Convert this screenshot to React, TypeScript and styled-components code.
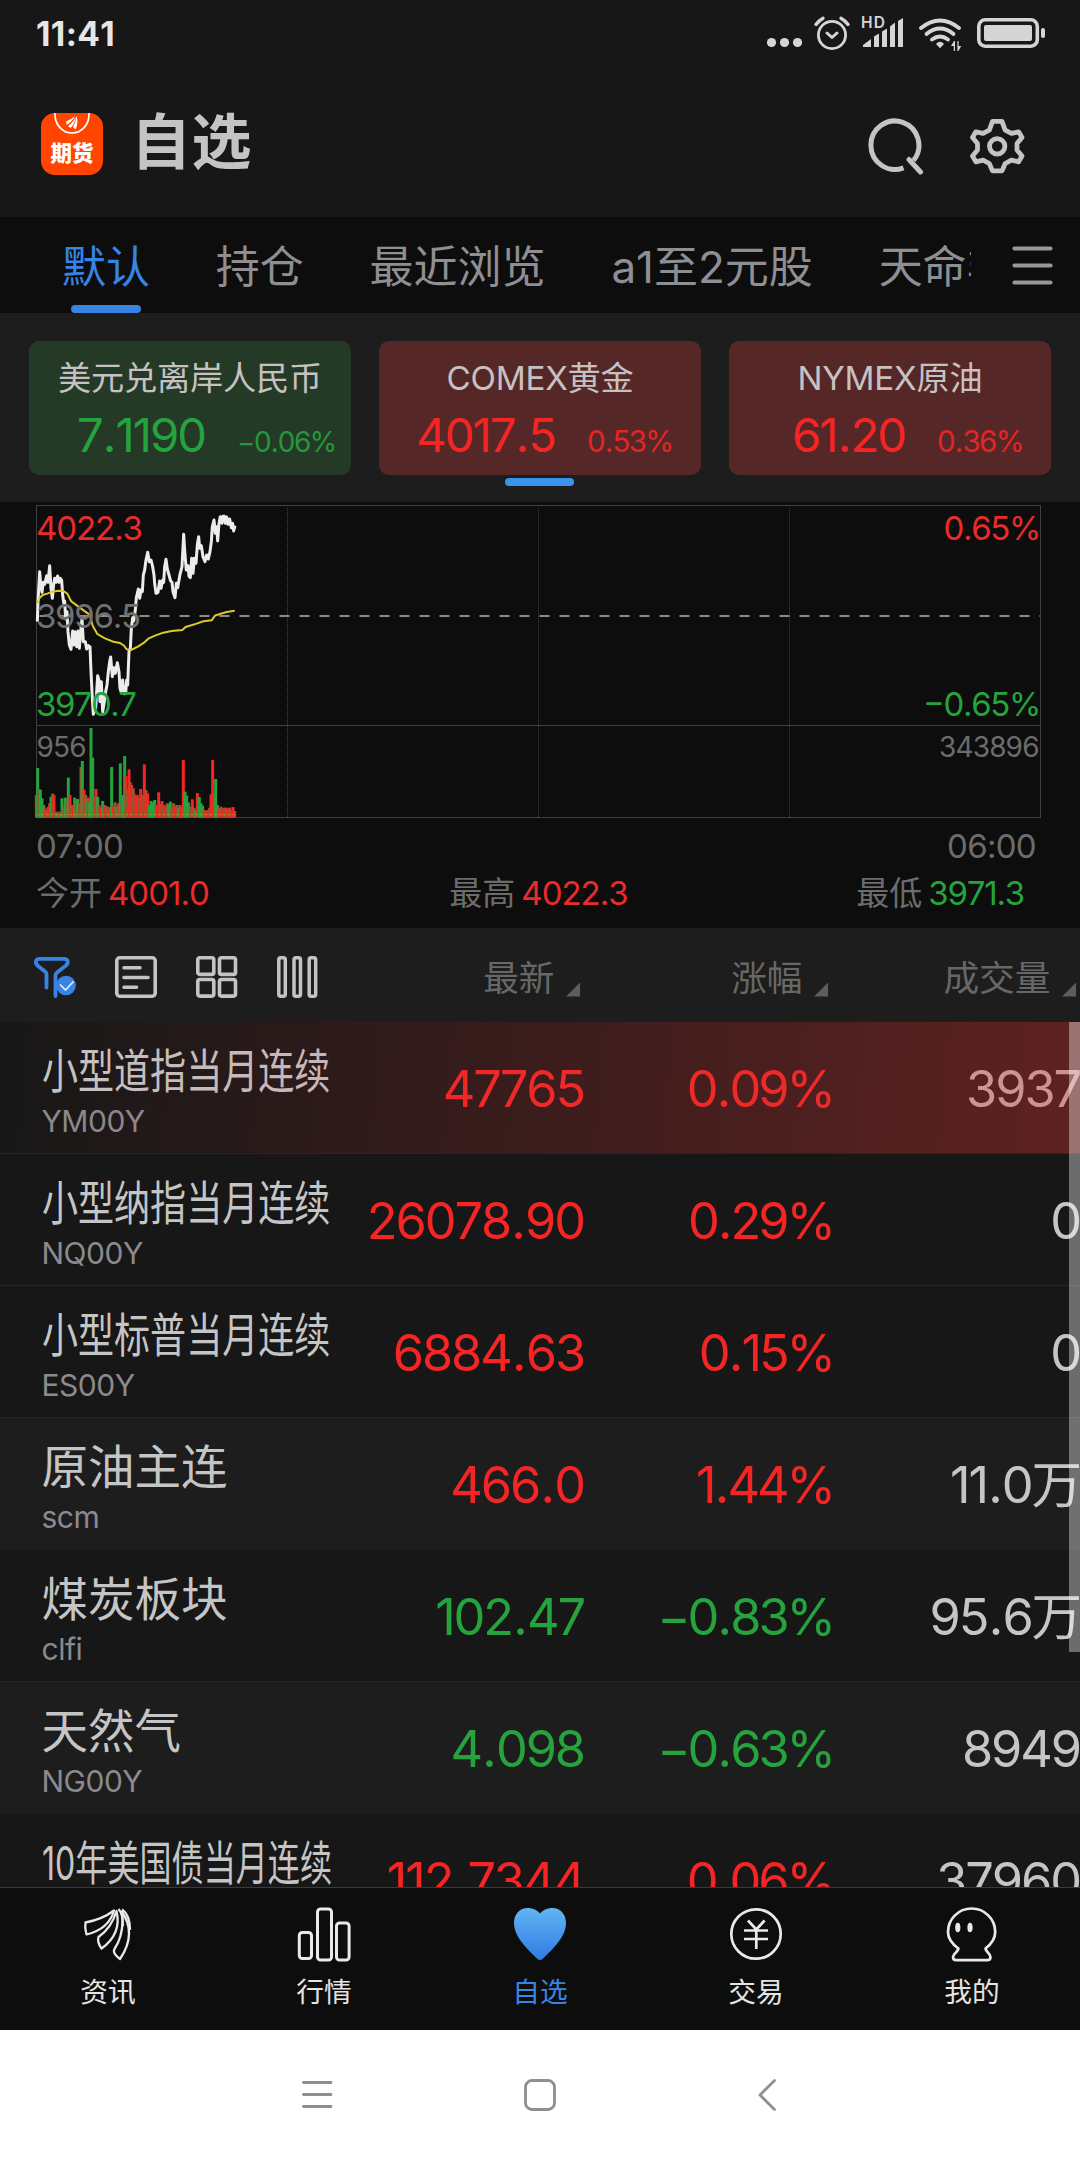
import React from "react";
import styled, { createGlobalStyle, css } from "styled-components";

const RED = "#f52525";
const GREEN = "#25a33d";
const BLUE = "#3784e4";
const LIGHT = "#c5c5c5";

const GlobalStyle = createGlobalStyle`
  *, *::before, *::after { box-sizing: border-box; }
  body {
    margin: 0;
    background: #171717;
    font-family: Inter, "Noto Sans CJK SC", sans-serif;
    font-kerning: none;
    -webkit-font-smoothing: antialiased;
  }
`;

const Screen = styled.div`
  width: 1080px;
  height: 2160px;
  display: flex;
  flex-direction: column;
  overflow: hidden;
  background: #171717;
`;

/* ---------- status bar and header ---------- */

const StatusBar = styled.div`
  height: 66px;
  padding: 2px 34px 0 36px;
  display: flex;
  justify-content: space-between;
  align-items: center;
`;

const Clock = styled.time`
  font-size: 33.5px;
  line-height: 40px;
  font-weight: 700;
  letter-spacing: 0.4px;
  color: #e6e6e6;
`;

const Header = styled.header`
  height: 151px;
  padding: 0 54px 0 41px;
  display: flex;
  align-items: center;
`;

const AppLogo = styled.div`
  width: 62px;
  height: 62px;
  margin-top: 5px;
  border-radius: 14px;
  background: #ff4500;
  overflow: hidden;
  display: flex;
  flex-direction: column;
  align-items: center;
`;

const LogoName = styled.span`
  margin-top: 3px;
  font-size: 21.5px;
  line-height: 30px;
  font-weight: 900;
  color: #fff;
`;

const Title = styled.h1`
  flex: 1;
  margin: 0 0 0 28px;
  font-size: 60px;
  line-height: 80px;
  font-weight: 700;
  letter-spacing: 0.5px;
  color: #c4c4c4;
`;

const HeaderActions = styled.div`
  display: flex;
  gap: 44px;
  padding-top: 8px;
`;

/* ---------- tabs ---------- */

const TabBar = styled.nav`
  height: 96px;
  background: #0d0d0d;
  display: flex;
`;

const TabList = styled.div`
  width: 971px;
  padding-left: 62px;
  display: flex;
  gap: 65.8px;
  overflow: hidden;
`;

const Tab = styled.div<{ $active?: boolean }>`
  flex: none;
  display: flex;
  flex-direction: column;
  align-items: center;
  justify-content: space-between;
  font-size: 44px;
  line-height: 64px;
  padding-top: 18px;
  white-space: nowrap;
  color: ${(p) => (p.$active ? BLUE : "#8e8e93")};
  &::after {
    content: "";
    width: 70px;
    height: 8px;
    border-radius: 4px;
    background: ${(p) => (p.$active ? BLUE : "transparent")};
  }
`;

const TabMenu = styled.div`
  padding: 28px 0 0 40px;
`;

/* ---------- index cards ---------- */

const CardStrip = styled.section`
  height: 189px;
  padding-top: 28px;
  background: #1d1d1d;
  display: flex;
  flex-direction: column;
  align-items: center;
  gap: 3px;
`;

const Cards = styled.div`
  display: grid;
  grid-template-columns: repeat(3, 322px);
  gap: 28px;
`;

const Card = styled.div<{ $down?: boolean }>`
  height: 134px;
  border-radius: 10px;
  background: ${(p) => (p.$down ? "#243a27" : "#562727")};
  color: ${(p) => (p.$down ? GREEN : RED)};
`;

const CardName = styled.div`
  padding-top: 12px;
  text-align: center;
  font-size: 33.2px;
  line-height: 50px;
  letter-spacing: -0.2px;
  color: #c6c2c2;
`;

const CardFigures = styled.div`
  display: grid;
  grid-template-columns: 176px 1fr;
  column-gap: 32px;
  align-items: baseline;
`;

const CardPrice = styled.span`
  text-align: right;
  font-size: 47.2px;
  line-height: 64px;
  letter-spacing: -2px;
`;

const CardChange = styled.span<{ $small?: boolean }>`
  font-size: ${(p) => (p.$small ? 28 : 29.5)}px;
  letter-spacing: -1.6px;
  white-space: nowrap;
  opacity: 0.9;
`;

const PageMark = styled.div`
  width: 69px;
  height: 8px;
  margin-right: 2px;
  border-radius: 4px;
  background: #3a92ec;
`;

/* ---------- intraday chart ---------- */

const ChartPanel = styled.section`
  height: 426px;
  background: #0d0d0d;
`;

const ChartSvg = styled.svg`
  display: block;
`;

const Times = styled.div`
  display: flex;
  justify-content: space-between;
  padding: 0 44px 0 36px;
  margin-top: 4px;
  font-size: 33px;
  line-height: 40px;
  letter-spacing: -0.7px;
  color: #6c6c6c;
`;

const Stats = styled.div`
  display: grid;
  grid-template-columns: 1fr 1fr 1fr;
  padding: 0 56px 0 36px;
  margin-top: 3px;
  font-size: 33px;
  line-height: 48px;
  color: #6c6c6c;
`;

const Stat = styled.div<{ $align: string }>`
  text-align: ${(p) => p.$align};
  ${(p) => p.$align === "center" && css`padding-left: 17px;`}
`;

const StatValue = styled.span<{ $down?: boolean }>`
  margin-left: 6px;
  letter-spacing: ${(p) => (p.$down ? -1.2 : -1)}px;
  color: ${(p) => (p.$down ? GREEN : "#e92b2b")};
`;

/* ---------- quote table ---------- */

const columns = css`
  display: grid;
  grid-template-columns: 336px 248px 248px 248px;
`;

const TableHead = styled.div`
  ${columns}
  height: 94px;
  background: #1d1d1d;
`;

const ViewIcons = styled.div`
  display: flex;
  align-items: center;
  gap: 37.2px;
  padding: 4px 0 0 33px;
`;

const HeadCell = styled.div`
  display: flex;
  justify-content: flex-end;
  align-items: center;
  gap: 11.5px;
  padding: 5px 4px 0 0;
  font-size: 35.7px;
  line-height: 52px;
  white-space: nowrap;
  color: #676767;
`;

const SortMark = styled.i`
  width: 14px;
  height: 14px;
  margin-top: 24px;
  background: #5d5d60;
  clip-path: polygon(100% 0, 100% 100%, 0 100%);
`;

const Table = styled.div`
  position: relative;
  height: 865px;
  overflow: hidden;
`;

const ScrollThumb = styled.div`
  position: absolute;
  top: 0;
  right: 0;
  width: 11px;
  height: 630px;
  background: rgba(255, 255, 255, 0.37);
`;

const Row = styled.div<{ $raised?: boolean; $flash?: boolean }>`
  ${columns}
  position: relative;
  height: 132px;
  background: ${(p) => (p.$raised ? "#1d1d1d" : "#171717")};
  border-bottom: 1px solid ${(p) => (p.$raised ? "#1d1d1d" : "#262626")};
  ${(p) =>
    p.$flash &&
    css`
      &::after {
        content: "";
        position: absolute;
        inset: 0;
        background: linear-gradient(95deg, rgba(220, 52, 52, 0) 0%, rgba(220, 52, 52, 0.37) 100%);
      }
    `}
`;

const NameCell = styled.div`
  padding: 16px 0 0 41.5px;
  white-space: nowrap;
`;

const Name = styled.div<{ $squeeze: number }>`
  font-size: 46.5px;
  line-height: 66px;
  color: ${LIGHT};
  transform: scaleX(${(p) => p.$squeeze});
  transform-origin: left;
`;

const Code = styled.div`
  margin-top: -1px;
  font-size: 30px;
  line-height: 36px;
  letter-spacing: -0.5px;
  color: #8a8a8f;
`;

const Figure = styled.div<{ $tone?: "up" | "down"; $percent?: boolean }>`
  padding-top: 35px;
  margin-right: ${(p) => (p.$percent ? -1 : 0)}px;
  text-align: right;
  font-size: 50.5px;
  line-height: 64px;
  letter-spacing: ${(p) => (p.$percent ? -3.1 : -2.1)}px;
  white-space: nowrap;
  color: ${(p) => (p.$tone === "up" ? RED : p.$tone === "down" ? GREEN : LIGHT)};
`;

const Point = styled.span`
  margin: 0 0.025em;
`;

/* ---------- bottom navigation ---------- */

const BottomNav = styled.nav`
  height: 143px;
  display: grid;
  grid-template-columns: repeat(5, 1fr);
  border-top: 1px solid #3a3a3a;
  background: #0d0d0d;
`;

const NavItem = styled.div<{ $active?: boolean }>`
  display: flex;
  flex-direction: column;
  align-items: center;
  padding-top: 18px;
  gap: 10px;
  font-size: 27.7px;
  line-height: 40px;
  color: ${(p) => (p.$active ? BLUE : "#e4e4e4")};
`;

const SystemBar = styled.div`
  height: 130px;
  background: #fff;
  display: grid;
  grid-template-columns: 302px 222px 234px 1fr;
  align-items: center;
  svg { grid-row: 1; display: block; }
  svg:nth-child(1) { grid-column: 2; }
  svg:nth-child(2) { grid-column: 3; }
  svg:nth-child(3) { grid-column: 4; }
`;

/* ---------- icons ---------- */

const StatusIcons = () => (
  <svg width="282" height="46" viewBox="764 11 282 46" fill="#d5d5d5">
    <circle cx="771.5" cy="42.5" r="4.6" />
    <circle cx="784.5" cy="42.5" r="4.6" />
    <circle cx="797.5" cy="42.5" r="4.6" />
    <g fill="none" stroke="#d5d5d5" strokeLinecap="round" strokeLinejoin="round">
      <circle cx="832" cy="35" r="13.6" strokeWidth="2.8" />
      <path d="M827 33l5 4.5 5-4.5" strokeWidth="3" />
      <path d="M816 24.500Q819 20.500 823 18.200M848 24.500Q845 20.500 841 18.200" strokeWidth="3.400" />
    </g>
    <text x="861" y="28" fontSize="15.500" fontWeight="600" textLength="24" fontFamily="Inter, sans-serif">HD</text>
    <path d="M863 47v-2l8-6v8zM874 47V36.500l5-3V47zM882 47V31.500l5-3V47zM890 47V26.500l5-4V47zM898 47V21l5-3V47z" />
    <g fill="none" stroke="#d5d5d5" strokeWidth="3.800" strokeLinecap="round">
      <path d="M921 28Q940 13 959 28" />
      <path d="M926.500 34Q940 23 953.500 34" />
      <path d="M932 39.500Q940 33.500 948 39.500" />
    </g>
    <path d="M936 44q4-4.500 8 0l-4 4.200z" />
    <path d="M951 46l3-5h1v10h-1.200v-5zM957.400 41h1.200v5h2.600l-2.800 5h-1z" />
    <rect x="978.800" y="19.800" width="58.500" height="26.400" rx="6.500" fill="none" stroke="#d5d5d5" strokeWidth="3.600" />
    <rect x="984" y="25" width="48" height="16" rx="2" />
    <rect x="1041" y="28" width="4" height="10" rx="2" />
  </svg>
);

const SearchIcon = () => (
  <svg width="58" height="58" viewBox="866 116 58 58" fill="none" stroke="#c4c4c4" strokeWidth="5">
    <path d="M903.500 166.800A24 24.200 0 1 1 913.500 159.500" />
    <path d="M909 158.500l11.500 12.500" strokeLinecap="round" />
  </svg>
);

const GearIcon = () => (
  <svg width="58" height="58" viewBox="968 116 58 58" fill="none" stroke="#c4c4c4" strokeWidth="4.800" strokeLinejoin="round">
    <path d="M992.500 120.400h9.500l3.200 8.800 6.200 3.200 7.200-1.600 3.400 5.700-5 6v6.500l5 6-3.400 5.800-7.200-1.700-6.200 3.400-3.200 7.400h-9.500l-3.200-7.400-6.200-3.400-7.200 1.700-3.400-5.800 5-6v-6.500l-5-6 3.400-5.700 7.200 1.600 6.200-3.200z" />
    <circle cx="997.200" cy="145.300" r="7.700" />
  </svg>
);

const LogoMark = () => (
  <svg width="36" height="22" viewBox="0 0 36 22" fill="none">
    <path d="M1 0C0.500 11 8 20 18 20S35.500 11 35 0" stroke="#fff" strokeWidth="1.700" />
    <path d="M12 8.500Q17 6.500 21 3Q18 9 12.600 11.800zM14 13Q19 10 21.500 4Q21 11 16.500 15zM19 14Q22 9 22.300 3Q25 9 21.500 16.500z" fill="#fff" />
  </svg>
);

const MenuIcon = () => (
  <svg width="42" height="44" viewBox="0 0 42 44" stroke="#98989a" strokeWidth="4.200" strokeLinecap="round">
    <path d="M3.500 3.500h36M3.500 20.500h36M3.500 37.500h36" />
  </svg>
);

const FilterIcon = () => (
  <svg width="44" height="44" viewBox="0 0 44 44" fill="none" stroke={BLUE} strokeWidth="3.800" strokeLinecap="round" strokeLinejoin="round">
    <path d="M13.500 32.500V19Q13.500 17.500 12 16.500L4.500 10.500Q2 8 3.200 5.500Q4 3.800 6.500 3.800H31Q34 3.800 34.700 6Q35.200 8.500 33 10.500L24 17.500Q22.500 18.700 22.500 20.500V41" />
    <circle cx="33" cy="30.500" r="9.800" fill={BLUE} stroke="none" />
    <path d="M27.500 30l5 5 7.500-8" stroke="#e8f0fb" strokeWidth="1.700" />
  </svg>
);

const ListIcon = () => (
  <svg width="44" height="44" viewBox="0 0 44 44" fill="none" stroke="#c4c4c4" strokeWidth="3.600">
    <rect x="2.800" y="2.800" width="38.400" height="38.400" rx="3" />
    <path d="M10 12.800h16M10 22.500h24M10 32.200h12.500" strokeLinecap="round" />
  </svg>
);

const GridIcon = () => (
  <svg width="44" height="44" viewBox="0 0 44 44" fill="none" stroke="#c4c4c4" strokeWidth="3.600">
    <rect x="2.800" y="2.800" width="16" height="16.600" rx="2" />
    <rect x="24.500" y="2.800" width="16" height="16.600" rx="2" />
    <rect x="2.800" y="24.500" width="16" height="16.600" rx="2" />
    <rect x="24.500" y="24.500" width="16" height="16.600" rx="2" />
  </svg>
);

const ColumnsIcon = () => (
  <svg width="44" height="44" viewBox="0 0 44 44" fill="none" stroke="#c4c4c4" strokeWidth="3.500">
    <rect x="1.800" y="2.800" width="6.500" height="38.400" rx="2" />
    <rect x="17" y="2.800" width="6.500" height="38.400" rx="2" />
    <rect x="32.200" y="2.800" width="6.500" height="38.400" rx="2" />
  </svg>
);

const NewsIcon = () => (
  <svg width="56" height="56" viewBox="0 0 56 56" fill="none" stroke="#e9e9e9" strokeWidth="2.300" strokeLinejoin="round">
    <path d="M5.500 16.500Q22 13.500 34 4.500Q29 23 6.500 28.500Q4.500 22 5.500 16.500z" />
    <path d="M18.500 31Q31.500 22 36.500 5Q42 28 21.500 42.500Q17 36 18.500 31z" />
    <path d="M34.500 43Q44.500 28 42 6Q57 28 40 53Q32 47 34.500 43z" />
    <path d="M38.500 3Q43 8 43 20M42 3.500Q50 9 50 24" />
  </svg>
);

const MarketIcon = () => (
  <svg width="56" height="56" viewBox="0 0 56 56" fill="none" stroke="#e9e9e9" strokeWidth="3">
    <rect x="3.300" y="26.500" width="12.200" height="26" rx="3" />
    <rect x="21.500" y="3" width="14" height="51" rx="3" />
    <rect x="40.500" y="17" width="12.600" height="37" rx="3" />
  </svg>
);

const HeartIcon = () => (
  <svg width="56" height="56" viewBox="0 0 56 56">
    <defs>
      <linearGradient id="heart" x1="0" y1="0" x2="0" y2="1">
        <stop offset="0" stopColor="#62b4f2" />
        <stop offset="1" stopColor="#2f7be4" />
      </linearGradient>
    </defs>
    <path d="M28 7.500C24.500 3.500 20 2 15.500 2 7 2 1.700 9 2 18 2.500 30.500 14 42 25 52.500Q28 55.500 31 52.500C42 42 53.500 30.500 54 18 54.300 9 49 2 40.500 2 36 2 31.500 3.500 28 7.500z" fill="url(#heart)" />
  </svg>
);

const TradeIcon = () => (
  <svg width="56" height="56" viewBox="0 0 56 56" fill="none" stroke="#e9e9e9" strokeWidth="2.700">
    <circle cx="28" cy="28" r="24.700" />
    <path d="M20 14.500l8.300 9 8.300-9M28.300 23.500V43M16 24.500h24M16 33h24" />
  </svg>
);

const ProfileIcon = () => (
  <svg width="56" height="56" viewBox="0 0 56 56" fill="none" stroke="#e9e9e9" strokeWidth="2.700" strokeLinejoin="round">
    <path d="M14.400 42.500C7.500 37.500 4 32 4 26A23.600 23.500 0 0 1 51.200 26C51.200 32 48 37.500 41.500 42.500C42 46.500 46.300 47 46.500 51Q46.500 54.200 43 54.200H12.500Q9 54.200 9 51C9.200 47 14 46.500 14.400 42.500z" />
    <ellipse cx="13.800" cy="21.500" rx="2.600" ry="4.800" fill="#e9e9e9" stroke="none" />
    <ellipse cx="26" cy="21.500" rx="2.600" ry="4.800" fill="#e9e9e9" stroke="none" />
  </svg>
);

/* ---------- chart data ---------- */

const pricePoints =
  "52,380 54,320 59,230 62,265 66,292 70,262 74,268 80,242 84,262 89,212 93,280 97,310 101,268 104,250 108,262 113,243 117,262 121,250 125,256 128,300 132,330 134,318 137,372 141,350 144,410 148,450 153,463 158,408 161,450 165,410 170,455 174,408 178,460 182,410 186,372 190,440 196,440 200,462 205,452 210,455 213,530 217,610 220,658 227,640 230,590 233,542 238,560 240,620 244,560 248,650 253,620 257,590 261,570 265,530 269,500 272,486 277,545 282,518 286,535 292,503 297,530 300,580 303,590 308,555 312,596 317,595 320,555 323,570 327,470 331,460 334,400 338,368 341,378 346,345 349,308 355,282 359,310 363,285 367,290 370,240 374,225 378,195 383,172 388,200 393,195 398,215 402,240 404,265 408,295 414,292 419,258 423,280 428,255 431,262 434,215 438,193 442,222 447,240 452,258 456,262 459,290 465,308 469,265 473,278 480,238 486,215 491,118 495,180 499,225 504,212 507,243 511,248 515,190 519,235 523,190 528,205 532,150 536,125 539,160 544,152 549,185 555,200 560,180 565,192 570,170 574,140 577,95 582,75 586,115 590,95 593,138 597,85 601,65 606,85 609,64 613,64 616,85 620,66 624,88 629,72 634,98 638,85 641,108 645,92";

const averagePoints =
  "52,325 58,310 68,300 82,296 97,290 115,287 130,288 142,296 153,318 175,335 200,353 210,360 218,392 232,417 255,430 280,440 300,444 312,452 320,463 335,464 355,454 372,443 385,431 405,422 430,413 455,408 487,405 497,396 530,386 550,379 575,376 585,362 600,357 620,351 644,347";

type Bar = [number, number, "r" | "g" | "b"];
const bars: Bar[] = [
  [49, 900, "b"], [53, 819, "g"], [56, 882, "b"], [61, 884, "g"], [66, 910, "g"], [71, 930, "g"], [75, 940, "r"],
  [79, 945, "b"], [84, 936, "r"], [89, 925, "r"], [93, 905, "g"], [98, 896, "b"], [102, 900, "r"], [107, 950, "b"],
  [111, 955, "g"], [116, 950, "b"], [121, 955, "g"], [126, 910, "g"], [131, 935, "b"], [136, 908, "g"], [141, 920, "b"],
  [145, 848, "g"], [150, 900, "r"], [155, 930, "b"], [160, 938, "r"], [164, 908, "g"], [168, 920, "b"], [173, 912, "g"],
  [178, 925, "b"], [183, 816, "b"], [187, 798, "g"], [192, 884, "r"], [197, 900, "b"], [201, 920, "g"], [205, 908, "r"],
  [209, 920, "g"], [213, 699, "g"], [218, 788, "g"], [223, 905, "b"], [228, 882, "r"], [233, 905, "g"], [237, 930, "b"],
  [242, 938, "r"], [248, 918, "g"], [253, 930, "b"], [257, 932, "r"], [262, 935, "b"], [266, 936, "r"], [270, 940, "b"],
  [275, 816, "g"], [280, 935, "r"], [285, 922, "b"], [290, 935, "g"], [295, 925, "r"], [301, 805, "g"], [306, 918, "b"],
  [310, 900, "g"], [314, 783, "g"], [318, 844, "r"], [322, 884, "b"], [327, 823, "r"], [331, 862, "b"], [335, 870, "r"],
  [340, 880, "b"], [344, 898, "r"], [348, 905, "b"], [352, 900, "r"], [357, 910, "b"], [362, 882, "r"], [367, 900, "b"],
  [373, 808, "r"], [378, 885, "b"], [383, 895, "r"], [388, 930, "g"], [393, 918, "g"], [398, 922, "g"], [404, 915, "g"],
  [409, 930, "r"], [416, 892, "r"], [421, 925, "b"], [426, 918, "r"], [431, 930, "b"], [436, 935, "r"], [441, 925, "b"],
  [446, 928, "g"], [451, 920, "g"], [456, 938, "r"], [461, 925, "b"], [466, 935, "r"], [471, 930, "b"], [476, 938, "g"],
  [480, 930, "b"], [485, 935, "r"], [490, 795, "r"], [495, 890, "g"], [500, 902, "g"], [505, 922, "g"], [511, 935, "b"],
  [517, 913, "r"], [522, 938, "b"], [527, 945, "g"], [532, 894, "r"], [538, 906, "g"], [543, 925, "g"], [548, 932, "g"],
  [553, 945, "r"], [558, 948, "b"], [563, 945, "r"], [569, 938, "b"], [573, 898, "r"], [578, 795, "r"], [583, 900, "b"],
  [587, 852, "g"], [592, 930, "g"], [598, 938, "r"], [603, 935, "b"], [608, 940, "r"], [614, 938, "b"], [619, 938, "r"],
  [624, 942, "b"], [629, 938, "r"], [634, 945, "b"], [639, 936, "r"], [644, 948, "r"],
];
const barColor = { r: RED, g: GREEN, b: "#98572c" };

const IntradayChart = () => (
  <ChartSvg width="1080" height="320" viewBox="0 502 1080 320" fontFamily="Inter, sans-serif">
    <g stroke="#404040" fill="none" shapeRendering="crispEdges">
      <rect x="36.500" y="505.500" width="1004" height="312" />
      <path d="M36 725.500H1041" />
      <path d="M287.500 508V817M538.500 508V817M789.500 508V817" strokeDasharray="1 1" />
    </g>
    <path d="M39.500 616H1040" stroke="#8c8c8c" strokeWidth="2" strokeDasharray="10 10" />
    <g transform="translate(20 495) scale(0.33333)">
      {bars.map(([x, top, tone]) => (
        <rect key={x} x={x - 4.500} y={top} width="9" height={968 - top} fill={barColor[tone]} />
      ))}
      <path d="M50 959H646" stroke="#b08a30" strokeWidth="3" strokeDasharray="8 6" />
      <polyline points={pricePoints} fill="none" stroke="#ececec" strokeWidth="9" strokeLinejoin="round" />
      <polyline points={averagePoints} fill="none" stroke="#dccb27" strokeWidth="6" />
    </g>
    <g fontSize="33">
      <text x="36" y="540" fill="#e92b2b" textLength="107">4022.3</text>
      <text x="36" y="628" fill="#707070" textLength="105">3996.5</text>
      <text x="36" y="716" fill={GREEN} textLength="101">3970.7</text>
      <text x="943.500" y="540" fill="#e92b2b" textLength="98">0.65%</text>
      <text x="923" y="716" fill={GREEN} textLength="118.500">−0.65%</text>
    </g>
    <g fontSize="28" fill="#6c6c6c">
      <text x="36.500" y="757" textLength="50">956</text>
      <text x="939" y="757" textLength="100.500">343896</text>
    </g>
  </ChartSvg>
);

/* ---------- page data ---------- */

const cards = [
  { name: "美元兑离岸人民币", price: "7.1190", change: "−0.06%", down: true },
  { name: "COMEX黄金", price: "4017.5", change: "0.53%" },
  { name: "NYMEX原油", price: "61.20", change: "0.36%" },
];

type Quote = {
  name: string;
  code: string;
  price: string;
  change: string;
  volume: string;
  down?: boolean;
  squeeze?: number;
  raised?: boolean;
  flash?: boolean;
};

const quotes: Quote[] = [
  { name: "小型道指当月连续", code: "YM00Y", price: "47765", change: "0.09%", volume: "3937", squeeze: 0.775, flash: true },
  { name: "小型纳指当月连续", code: "NQ00Y", price: "26078.90", change: "0.29%", volume: "0", squeeze: 0.775 },
  { name: "小型标普当月连续", code: "ES00Y", price: "6884.63", change: "0.15%", volume: "0", squeeze: 0.775 },
  { name: "原油主连", code: "scm", price: "466.0", change: "1.44%", volume: "11.0万", raised: true },
  { name: "煤炭板块", code: "clfi", price: "102.47", change: "−0.83%", volume: "95.6万", down: true },
  { name: "天然气", code: "NG00Y", price: "4.098", change: "−0.63%", volume: "8949", down: true, raised: true },
  { name: "10年美国债当月连续", code: "ZN00Y", price: "112.7344", change: "0.06%", volume: "37960", squeeze: 0.69 },
];

const tabs = ["默认", "持仓", "最近浏览", "a1至2元股", "天命非"];

const navItems = [
  { label: "资讯", icon: <NewsIcon /> },
  { label: "行情", icon: <MarketIcon /> },
  { label: "自选", icon: <HeartIcon />, active: true },
  { label: "交易", icon: <TradeIcon /> },
  { label: "我的", icon: <ProfileIcon /> },
];

/* Figures get a little more air around the decimal point than the font gives. */
const Num = ({ value }: { value: string }) => {
  const [whole, fraction] = value.split(".");
  return fraction === undefined ? <>{whole}</> : <>{whole}<Point>.</Point>{fraction}</>;
};

export default function App() {
  return (
    <>
      <GlobalStyle />
      <Screen>
        <StatusBar>
          <Clock>11:41</Clock>
          <StatusIcons />
        </StatusBar>
        <Header>
          <AppLogo>
            <LogoMark />
            <LogoName>期货</LogoName>
          </AppLogo>
          <Title>自选</Title>
          <HeaderActions>
            <SearchIcon />
            <GearIcon />
          </HeaderActions>
        </Header>

        <TabBar>
          <TabList>
            {tabs.map((t, i) => (
              <Tab key={t} $active={i === 0}>{t}</Tab>
            ))}
          </TabList>
          <TabMenu><MenuIcon /></TabMenu>
        </TabBar>

        <CardStrip>
          <Cards>
            {cards.map((c) => (
              <Card key={c.name} $down={c.down}>
                <CardName>{c.name}</CardName>
                <CardFigures>
                  <CardPrice><Num value={c.price} /></CardPrice>
                  <CardChange $small={c.down}><Num value={c.change} /></CardChange>
                </CardFigures>
              </Card>
            ))}
          </Cards>
          <PageMark />
        </CardStrip>

        <ChartPanel>
          <IntradayChart />
          <Times>
            <span>07:00</span>
            <span>06:00</span>
          </Times>
          <Stats>
            <Stat $align="left">今开<StatValue>4001.0</StatValue></Stat>
            <Stat $align="center">最高<StatValue>4022.3</StatValue></Stat>
            <Stat $align="right">最低<StatValue $down>3971.3</StatValue></Stat>
          </Stats>
        </ChartPanel>

        <TableHead>
          <ViewIcons>
            <FilterIcon />
            <ListIcon />
            <GridIcon />
            <ColumnsIcon />
          </ViewIcons>
          {["最新", "涨幅", "成交量"].map((h) => (
            <HeadCell key={h}>{h}<SortMark /></HeadCell>
          ))}
        </TableHead>
        <Table>
          {quotes.map((q) => (
            <Row key={q.code} $raised={q.raised} $flash={q.flash}>
              <NameCell>
                <Name $squeeze={q.squeeze ?? 1}>{q.name}</Name>
                <Code>{q.code}</Code>
              </NameCell>
              <Figure $tone={q.down ? "down" : "up"}><Num value={q.price} /></Figure>
              <Figure $tone={q.down ? "down" : "up"} $percent><Num value={q.change} /></Figure>
              <Figure><Num value={q.volume} /></Figure>
            </Row>
          ))}
          <ScrollThumb />
        </Table>

        <BottomNav>
          {navItems.map((n) => (
            <NavItem key={n.label} $active={n.active}>
              {n.icon}
              <span>{n.label}</span>
            </NavItem>
          ))}
        </BottomNav>

        <SystemBar>
          <svg width="31" height="32" viewBox="0 0 31 32" stroke="#8f8f8f" strokeWidth="2.800" strokeLinecap="round">
            <path d="M1.500 3.500h27.500M1.500 15.500h27.500M1.500 27.500h27.500" />
          </svg>
          <svg width="32" height="32" viewBox="0 0 32 32" fill="none" stroke="#8f8f8f" strokeWidth="2.800">
            <rect x="1.500" y="1.500" width="29" height="29" rx="6.500" />
          </svg>
          <svg width="20" height="32" viewBox="0 0 20 32" fill="none" stroke="#8f8f8f" strokeWidth="2.800" strokeLinecap="round" strokeLinejoin="round">
            <path d="M16.500 1.500L2 16l14.500 14.500" />
          </svg>
        </SystemBar>
      </Screen>
    </>
  );
}
